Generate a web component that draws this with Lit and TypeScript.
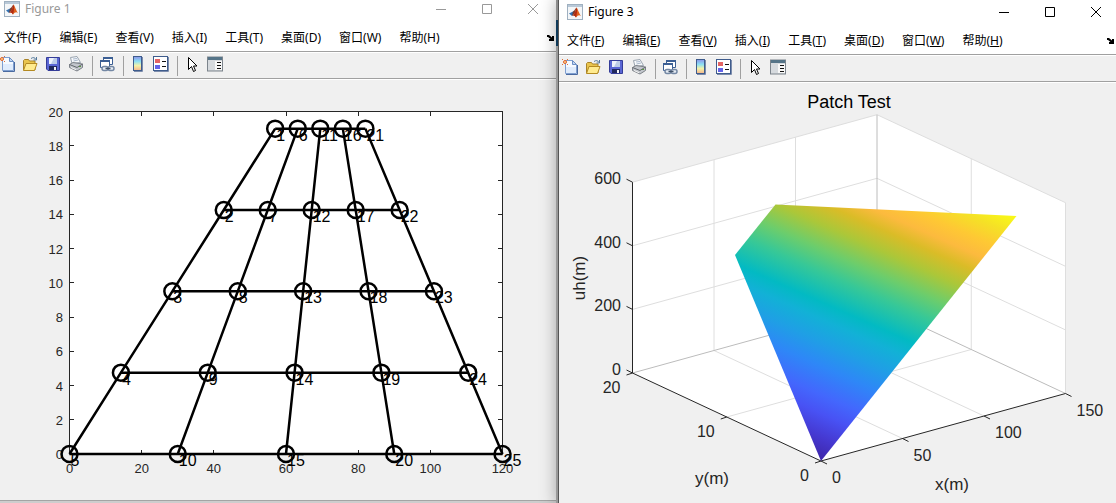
import { LitElement, html, svg, css } from "lit";
import { customElement, property } from "lit/decorators.js";
import { classMap } from "lit/directives/class-map.js";

const MENUS: [string, string][] = [
  ["文件", "F"],
  ["编辑", "E"],
  ["查看", "V"],
  ["插入", "I"],
  ["工具", "T"],
  ["桌面", "D"],
  ["窗口", "W"],
  ["帮助", "H"],
];

const icon = (body: unknown) =>
  html`<svg viewBox="0 0 16 16" width="16" height="16" aria-hidden="true">${body}</svg>`;

const ICONS = {
  logo: svg`
    <rect x=".5" y=".5" width="15" height="15" fill="#f4f6f8" stroke="#9fb0c0"/>
    <path d="M1 1h14v2H1z" fill="#b9c9d8"/>
    <path d="M2 9.500 6 7.500 8 9 5 12z" fill="#2f6fb0"/>
    <path d="M6 7.500C8 6.500 8.500 4 9.500 3.500L8 9 5 12z" fill="#7c3a2a"/>
    <path d="M9.500 3.500C11 5 12 9.500 14 12 12 10.500 11 11 9 13.500 8 12 7 11 5 12 8 10.500 8.500 6 9.500 3.500z" fill="#e0601c"/>
    <path d="M9.500 3.500C10.500 6 10 10 9 13.500 8 12 7 11 5 12 8 10.500 8.500 6 9.500 3.500z" fill="#b02a12"/>`,
  fresh: svg`
    <path d="M3.500 1.500h7l4 4v9h-11z" fill="#f6faff" stroke="#7f9fd0"/>
    <path d="M4 8h10v6H4z" fill="#e0ecfc"/>
    <path d="M15.500 6v9.500H4" fill="none" stroke="#4a6aa0"/>
    <path d="M10.500 1.500v4h4z" fill="#c2d6f2" stroke="#6c8fc4"/>
    <circle cx="3" cy="3" r="1.500" fill="#ffd58a" stroke="#e0602c"/>
    <path d="M0 0h1v1H0zM5 0h1v1H5zM0 5h1v1H0zM5 5h1v1H5z" fill="#e0703a"/>`,
  open: svg`
    <path d="M1.500 14V4.500l1-1h4l1 1.500h5.500V14z" fill="#e9c44d" stroke="#a8832a"/>
    <path d="M1.500 14.500 4 7.500h11l-2.500 7z" fill="#ffeb8f" stroke="#b48a22"/>
    <path d="M9 2.500c2-1.500 4-1 5 1M14.500 1v3h-3" fill="none" stroke="#557a9c"/>`,
  save: svg`
    <path d="M1.500 1.500h13v13h-11.500l-1.500-1.500z" fill="#5a66d4" stroke="#343c98"/>
    <path d="M4 2h8v6H4z" fill="#eef2fb"/>
    <path d="M9 2h3v6H6z" fill="#bccbe8"/>
    <path d="M4 10h8v4H4z" fill="#20285c"/>
    <path d="M9 11h2v3H9z" fill="#f4f4f8"/>`,
  print: svg`
    <path d="M4 7.500 2.500 1.500 9 .5l3.500 6z" fill="#f8fafc" stroke="#9aa4b0"/>
    <path d="M5 3l4-.5M5.500 5 10 4" stroke="#a8b8cc" fill="none"/>
    <path d="M1.500 8.500 5 6.500l9.500 1.500v3.500L9 15 1.500 11.500z" fill="#c2c6cc" stroke="#7c8188"/>
    <path d="M1.500 8.500 9 11.500 14.500 8" fill="none" stroke="#63686e"/>
    <path d="M3 11.500l5 2.200" stroke="#f4f4f4"/>
    <rect x="11" y="10" width="2" height="1" fill="#5a9a3c"/>`,
  link: svg`
    <path d="M4.500 1.500h9v7h-9z" fill="#fff" stroke="#3c5f94"/>
    <path d="M4 1h10v2H4z" fill="#3c5f94"/>
    <path d="M1.500 4.500h9v7h-9z" fill="#fff" stroke="#3c5f94"/>
    <path d="M1 4h10v2H1z" fill="#3c5f94"/>
    <rect x="3" y="10.500" width="6" height="4" rx="2" fill="#e6ecf4" stroke="#7488a4" stroke-width="1.500"/>
    <rect x="9" y="10.500" width="6" height="4" rx="2" fill="#e6ecf4" stroke="#7488a4" stroke-width="1.500"/>
    <path d="M6.500 12.500h5" stroke="#405268" stroke-width="1.500"/>`,
  colorbar: svg`
    <defs><linearGradient id="bar" x1="0" y1="0" x2="0" y2="1">
      <stop offset="0" stop-color="#8c92ea"/><stop offset=".35" stop-color="#8ce0f4"/>
      <stop offset=".65" stop-color="#f4f2a8"/><stop offset="1" stop-color="#f4b48c"/>
    </linearGradient></defs>
    <rect x="3.500" y=".5" width="8" height="14" fill="url(#bar)" stroke="#3f5c8c"/>
    <path d="M12.500 1v14.500H4" fill="none" stroke="#7c8cac"/>`,
  legend: svg`
    <rect x=".5" y=".5" width="14" height="14" fill="#fff" stroke="#3f5c8c"/>
    <path d="M15.500 1v14.500H1" fill="none" stroke="#7c8cac"/>
    <rect x="2" y="3" width="5" height="4" fill="#e46464"/>
    <rect x="2" y="9" width="5" height="4" fill="#6464e8"/>
    <path d="M9 5.500h4M9 10.500h4" stroke="#111"/>`,
  cursor: svg`
    <path d="M4.500 1.500v12l3-3 2 5 2-1-2-4.500h3.500z" fill="#fff" stroke="#000"/>`,
  panel: svg`
    <rect x=".5" y="1" width="15" height="14" fill="#d6dade" stroke="#7c848c"/>
    <path d="M1 1h14v3H1z" fill="#557488"/>
    <rect x="8" y="5" width="7" height="9" fill="#f8f8f8"/>
    <path d="M10 6.500h4M10 9.500h4M10 12.500h4" stroke="#111"/>`,
};

const TOOLS: [string, unknown][][] = [
  [
    ["新建图窗", ICONS.fresh],
    ["打开文件", ICONS.open],
    ["保存图窗", ICONS.save],
    ["打印图窗", ICONS.print],
  ],
  [["链接绘图", ICONS.link]],
  [
    ["插入颜色栏", ICONS.colorbar],
    ["插入图例", ICONS.legend],
  ],
  [
    ["编辑绘图", ICONS.cursor],
    ["打开属性检查器", ICONS.panel],
  ],
];

@customElement("figure-window")
export class FigureWindow extends LitElement {
  @property() heading = "";
  @property({ type: Boolean, reflect: true }) active = false;

  static styles = css`
    :host {
      display: block;
      background: #f0f0f0;
      color: #000;
      font: 12px/16px "Noto Sans", "Noto Sans CJK SC", sans-serif;
    }
    button {
      border: 0;
      margin: 0;
      padding: 0;
      background: none;
      color: inherit;
      font: inherit;
    }
    svg {
      display: block;
    }
    .title {
      display: flex;
      align-items: center;
      height: 24px;
      padding: 0 0 3px 8px;
      background: #fff;
      color: #999;
      overflow: hidden;
    }
    .title.active {
      color: #000;
    }
    .name {
      flex: 1;
      margin: 0 0 0 5px;
      font: inherit;
    }
    .control {
      display: grid;
      place-items: center;
      width: 46px;
      height: 24px;
    }
    .active .control:last-child {
      margin-right: -3px;
    }
    .menu {
      display: flex;
      align-items: center;
      gap: 18px;
      height: 27px;
      padding: 0 2px 0 8px;
      background: #fff;
      border-bottom: 1px solid #a0a0a0;
      white-space: nowrap;
    }
    .dock {
      margin-left: auto;
    }
    .tools {
      display: flex;
      height: 22px;
      padding-top: 3px;
      border-top: 1px solid #fff;
      border-bottom: 1px solid #a0a0a0;
      box-shadow: 0 1px #fff;
    }
    .group {
      display: flex;
      align-items: flex-start;
      height: 20px;
    }
    .group + .group {
      border-left: 1px solid #a0a0a0;
      margin-left: 4px;
      padding-left: 3px;
    }
    .tool {
      padding: 0 4px 0 3px;
    }
  `;

  render() {
    return html`
      <header class=${classMap({ title: true, active: this.active })}>
        ${icon(ICONS.logo)}
        <h1 class="name">${this.heading}</h1>
        <button class="control" aria-label="最小化">
          <svg width="10" height="10"><path d="M0 5.500h10" stroke="currentColor" /></svg>
        </button>
        <button class="control" aria-label="最大化">
          <svg width="10" height="10"><path d="M.5.5h9v9h-9z" fill="none" stroke="currentColor" /></svg>
        </button>
        <button class="control" aria-label="关闭">
          <svg width="10" height="10"><path d="M0 0l10 10M10 0 0 10" stroke="currentColor" /></svg>
        </button>
      </header>
      <nav class="menu">
        ${MENUS.map(
          ([label, key]) =>
            html`<button>${label}(${this.active ? html`<u>${key}</u>` : key})</button>`
        )}
        <button class="dock" aria-label="停靠">
          <svg width="7" height="6">
            <path d="M0 0h2l3 2.500V1h2v5H2V4h1.500L1 2H0z" fill="#000" />
          </svg>
        </button>
      </nav>
      <div class="tools" role="toolbar">
        ${TOOLS.map(
          (group) => html`<div class="group">
            ${group.map(
              ([label, glyph]) =>
                html`<button class="tool" aria-label=${label}>${icon(glyph)}</button>`
            )}
          </div>`
        )}
      </div>
      <slot></slot>
    `;
  }
}

const plotStyles = css`
  :host {
    display: block;
  }
  svg {
    display: block;
    width: 100%;
    height: auto;
    font-family: "Liberation Sans", Arial, sans-serif;
  }
  .end {
    text-anchor: end;
  }
  .middle {
    text-anchor: middle;
  }
`;

/* Numbered nodes of a trapezoidal 4x4 element mesh. */
@customElement("mesh-plot")
export class MeshPlot extends LitElement {
  static styles = [
    plotStyles,
    css`
      .box {
        fill: #fff;
        stroke: #262626;
      }
      .tick {
        stroke: #262626;
      }
      .edge,
      .node {
        fill: none;
        stroke: #000;
        stroke-width: 2.500;
      }
      .axis {
        font-size: 13px;
        fill: #262626;
      }
      .label {
        font-size: 16px;
      }
    `,
  ];

  render() {
    const px = (x: number) => 69.5 + (x * 433) / 120;
    const py = (y: number) => 454 - (y * 342.5) / 20;
    const columns = [0, 1, 2, 3, 4].map((c) =>
      [0, 1, 2, 3, 4].map((r) => {
        const bottom = 30 * c;
        const top = 57 + 6.25 * c;
        return [px(top + ((bottom - top) * r) / 4), py(19 - 4.75 * r)];
      })
    );
    const rows = [0, 1, 2, 3, 4].map((r) => columns.map((col) => col[r]));
    const xs = [0, 20, 40, 60, 80, 100, 120];
    const ys = [0, 2, 4, 6, 8, 10, 12, 14, 16, 18, 20];
    return html`<svg viewBox="-4 79 560 421" role="img" aria-label="Figure 1">
      <rect class="box" x="69.5" y="111.5" width="433" height="342.5" />
      ${xs.map(
        (x) => svg`<path class="tick" d="M${Math.floor(px(x)) + 0.5} 454v-4M${Math.floor(px(x)) + 0.5} 112v4"/>
          <text class="axis middle" x=${px(x)} y="473">${x}</text>`
      )}
      ${ys.map(
        (y) => svg`<path class="tick" d="M70 ${Math.floor(py(y)) + 0.5}h4M502 ${Math.floor(py(y)) + 0.5}h-4"/>
          <text class="axis end" x="63" y=${Math.round(py(y) + 5)}>${y}</text>`
      )}
      ${[...columns, ...rows].map(
        (line) => svg`<polyline class="edge" points=${line.map((p) => p.join()).join(" ")} />`
      )}
      ${columns.flat().map(
        ([x, y], i) => svg`<circle class="node" cx=${x} cy=${y} r="8"/>
          <text class="label" x=${x + 1} y=${y + 12}>${i + 1}</text>`
      )}
    </svg>`;
  }
}

const PARULA: [number, string][] = [
  [0, "#3e26a8"],
  [0.07, "#4538d0"],
  [0.143, "#4852f4"],
  [0.2, "#4367fd"],
  [0.286, "#2e87f7"],
  [0.36, "#1f9fe5"],
  [0.429, "#12b1d6"],
  [0.48, "#02bac3"],
  [0.571, "#37c897"],
  [0.64, "#6ccd6c"],
  [0.714, "#abc739"],
  [0.78, "#dabc27"],
  [0.83, "#fcba3e"],
  [0.88, "#fec834"],
  [0.94, "#f5e126"],
  [1, "#f9fb15"],
];

/* Linear displacement field drawn over its quadrilateral domain. */
@customElement("surface-plot")
export class SurfacePlot extends LitElement {
  static styles = [
    plotStyles,
    css`
      .wall {
        fill: #fff;
      }
      .grid {
        fill: none;
        stroke: #dedede;
      }
      .back {
        fill: none;
        stroke: #bcbcbc;
      }
      .axis {
        fill: none;
        stroke: #262626;
      }
      .num {
        font-size: 16px;
        fill: #262626;
      }
      .name {
        font-size: 17px;
        fill: #262626;
      }
      .heading {
        font-size: 18px;
      }
    `,
  ];

  render() {
    const at = (x: number, y: number, z: number): [number, number] => [
      821 + (x * 244.5) / 150 - (y * 188.5) / 20,
      461 - (x * 67.5) / 150 - (y * 88) / 20 - (z * 190.8) / 600,
    ];
    const path = (...points: [number, number, number][]) =>
      "M" + points.map((p) => at(...p).join(" ")).join("L");
    const tick = (x: number, y: number, z: number, dx: number, dy: number) =>
      svg`<path class="axis" d="M${at(x, y, z).join(" ")}l${dx} ${dy}"/>`;
    return html`<svg viewBox="559 82 557 421" role="img" aria-label="Patch Test">
      <defs>
        <linearGradient id="field" gradientUnits="userSpaceOnUse" x1="821" y1="461" x2="943.7" y2="183.9">
          ${PARULA.map(([o, c]) => svg`<stop offset=${o} stop-color=${c}/>`)}
        </linearGradient>
      </defs>
      <path
        class="wall"
        d=${path([0, 0, 0], [0, 20, 0], [0, 20, 600], [150, 20, 600], [150, 0, 600], [150, 0, 0])}
      />
      ${[50, 100].map((x) => svg`<path class="grid" d=${path([x, 0, 0], [x, 20, 0], [x, 20, 600])}/>`)}
      <path class="grid" d=${path([0, 10, 0], [150, 10, 0], [150, 10, 600])} />
      ${[200, 400, 600].map(
        (z) => svg`<path class="grid" d=${path([0, 20, z], [150, 20, z], [150, 0, z])}/>`
      )}
      <path class="grid" d=${path([150, 0, 0], [150, 0, 600])} />
      <path class="back" d=${path([0, 20, 0], [150, 20, 0], [150, 0, 0])} />
      <path class="back" d=${path([150, 20, 0], [150, 20, 600])} />
      <path class="axis" d=${path([0, 20, 600], [0, 20, 0], [0, 0, 0], [150, 0, 0])} />
      ${[0, 200, 400, 600].map((z) => tick(0, 20, z, -6, -3))}
      ${[0, 10, 20].map((y) => tick(0, y, 0, -6, 2))}
      ${[0, 50, 100, 150].map((x) => tick(x, 0, 0, 6, 3))}
      <path fill="url(#field)" d="M821 461L735 255 775.500 204.500 1016.500 216z" />
      ${[0, 200, 400, 600].map(
        (z) => svg`<text class="num end" x="621" y=${Math.round(at(0, 20, z)[1] + 2)}>${z}</text>`
      )}
      ${[0, 10, 20].map((y) => {
        const [cx, cy] = at(0, y, 0);
        return svg`<text class="num end" x=${cx - 12} y=${Math.round(cy + 20)}>${y}</text>`;
      })}
      ${[0, 50, 100, 150].map((x) => {
        const [cx, cy] = at(x, 0, 0);
        return svg`<text class="num" x=${cx + 11} y=${Math.round(cy + 22)}>${x}</text>`;
      })}
      <text class="heading middle" x="849" y="108">Patch Test</text>
      <text class="name middle" x="952" y="490">x(m)</text>
      <text class="name middle" x="712" y="484">y(m)</text>
      <text class="name middle" transform="translate(585 278) rotate(-90)">uh(m)</text>
    </svg>`;
  }
}

@customElement("app-root")
export class AppRoot extends LitElement {
  static styles = css`
    :host {
      display: grid;
      grid-template-columns: minmax(0, 556fr) 3px minmax(0, 557fr);
      min-height: 100vh;
      overflow: hidden;
      background: #cdcdcd;
    }
    .rear {
      margin: -3px 0 0 -4px;
      align-self: start;
      border-bottom: 1px solid #a4a4a4;
    }
    .gap {
      z-index: 2;
      border-right: 1px solid #555;
      background: linear-gradient(#8c8c8c 20px, #0f3a5a 20px 46px, #999 46px);
    }
    .front {
      z-index: 1;
      box-shadow: 0 0 16px 2px rgba(0, 0, 0, 0.35);
    }
  `;

  render() {
    return html`
      <figure-window class="rear" heading="Figure 1"><mesh-plot></mesh-plot></figure-window>
      <div class="gap"></div>
      <figure-window class="front" heading="Figure 3" active><surface-plot></surface-plot></figure-window>
    `;
  }
}
